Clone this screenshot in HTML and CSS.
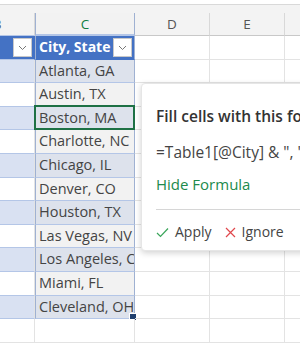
FILE: index.html
```html
<!DOCTYPE html>
<html lang="en">
<head>
    <meta charset="UTF-8">
    <meta name="viewport" content="width=device-width, initial-scale=1.0">
    <title>Fill cells</title>
    <link rel="stylesheet" href="styles.css">
</head>
<body>
    <div class="sheet">
        <div class="topbar"></div>
        <div class="topgap"></div>
        <div class="row colhead">
            <div class="cell b">B</div>
            <div class="cell c">C</div>
            <div class="cell d">D</div>
            <div class="cell e">E</div>
            <div class="cell f"></div>
        </div>
        <div class="row thead">
            <div class="cell b"><span class="drop"><svg width="9" height="6" viewBox="0 0 9 6"><path d="M1 1l3.5 3.5L8 1" fill="none" stroke="#777" stroke-width="1"/></svg></span></div>
            <div class="cell c">City, State<span class="drop"><svg width="9" height="6" viewBox="0 0 9 6"><path d="M1 1l3.5 3.5L8 1" fill="none" stroke="#777" stroke-width="1"/></svg></span></div>
            <div class="cell d"></div>
            <div class="cell e"></div>
            <div class="cell f"></div>
        </div>
        <div class="row band"><div class="cell b"></div><div class="cell c">Atlanta, GA</div><div class="cell d"></div><div class="cell e"></div><div class="cell f"></div></div>
        <div class="row"><div class="cell b"></div><div class="cell c">Austin, TX</div><div class="cell d"></div><div class="cell e"></div><div class="cell f"></div></div>
        <div class="row band"><div class="cell b"></div><div class="cell c active">Boston, MA</div><div class="cell d"></div><div class="cell e"></div><div class="cell f"></div></div>
        <div class="row"><div class="cell b"></div><div class="cell c">Charlotte, NC</div><div class="cell d"></div><div class="cell e"></div><div class="cell f"></div></div>
        <div class="row band"><div class="cell b"></div><div class="cell c">Chicago, IL</div><div class="cell d"></div><div class="cell e"></div><div class="cell f"></div></div>
        <div class="row"><div class="cell b"></div><div class="cell c">Denver, CO</div><div class="cell d"></div><div class="cell e"></div><div class="cell f"></div></div>
        <div class="row band"><div class="cell b"></div><div class="cell c">Houston, TX</div><div class="cell d"></div><div class="cell e"></div><div class="cell f"></div></div>
        <div class="row"><div class="cell b"></div><div class="cell c">Las Vegas, NV</div><div class="cell d"></div><div class="cell e"></div><div class="cell f"></div></div>
        <div class="row band"><div class="cell b"></div><div class="cell c">Los Angeles, CA</div><div class="cell d"></div><div class="cell e"></div><div class="cell f"></div></div>
        <div class="row"><div class="cell b"></div><div class="cell c">Miami, FL</div><div class="cell d"></div><div class="cell e"></div><div class="cell f"></div></div>
        <div class="row band"><div class="cell b"></div><div class="cell c last">Cleveland, OH<span class="handle"></span></div><div class="cell d"></div><div class="cell e"></div><div class="cell f"></div></div>
        <div class="row plain"><div class="cell b"></div><div class="cell c"></div><div class="cell d"></div><div class="cell e"></div><div class="cell f"></div></div>
    </div>

    <div class="popup">
        <div class="pop-title">Fill cells with this formula?</div>
        <div class="pop-formula">=Table1[@City] &amp; ", " &amp; Table1[@State]</div>
        <div class="pop-link">Hide Formula</div>
        <div class="pop-actions">
            <span class="act"><svg width="13" height="11" viewBox="0 0 13 11"><path d="M1 6l3.5 3.5L12 1.5" fill="none" stroke="#3aa55a" stroke-width="1.2"/></svg>Apply</span>
            <span class="act"><svg width="11" height="11" viewBox="0 0 11 11"><path d="M1 1l9 9M10 1l-9 9" fill="none" stroke="#e0474c" stroke-width="1.2"/></svg>Ignore</span>
        </div>
    </div>
</body>
</html>
```

FILE: styles.css
```css
body { margin: 0; width: 300px; height: 350px; overflow: hidden; position: relative; background: #fff; font-family: "Open Sans", "Noto Sans", sans-serif; }

.sheet { margin-left: -40px; width: 400px; }
.topbar { height: 4px; border-bottom: 1px solid #d9d9d9; background: #fff; }
.topgap { height: 8px; background: #f3f3f3; }

.row { display: flex; height: 23.6px; }
.cell { box-sizing: border-box; height: 100%; border-right: 1px solid #e3e3e3; border-bottom: 1px solid #e3e3e3; font-size: 14.5px; line-height: 22px; color: #444; white-space: nowrap; overflow: hidden; position: relative; }
.b { width: 75px; }
.c { width: 100px; padding-left: 3px; }
.d { width: 75px; }
.e { width: 75px; }
.f { width: 75px; }

.colhead { height: 23px; background: #f3f3f3; }
.colhead .cell { text-align: center; font-size: 13.5px; line-height: 22px; color: #555; border-right-color: #d8d8d8; border-bottom-color: #c8c8c8; }
.colhead .c { background: #d3f0e0; color: #107c41; border-bottom: 2px solid #107c41; padding-left: 0; }
.colhead .b { padding-left: 0; }

.thead .b, .thead .c { background: #4472c4; color: #fff; font-weight: 700; border-right-color: #4472c4; border-bottom-color: #4472c4; }
.thead .c { border-left: 1px solid #8ea3c8; font-size: 14px; }
.drop { position: absolute; right: 2px; top: 2px; width: 19px; height: 19px; box-sizing: border-box; background: #fff; border: 1px solid #c9c9c9; display: flex; align-items: center; justify-content: center; }

.row .b { border-bottom-color: #b4c6e7; }
.band .b { background: #d9e1f2; }
.row .c { border-left: 1px solid #9fb1d2; border-right: 1px solid #9fb1d2; border-bottom-color: #b4c6e7; background: #f2f2f2; }
.band .c { background: #dde2ec; }
.thead .c { background: #4472c4; border-bottom-color: #4472c4; }
.plain .b { border-bottom-color: #e3e3e3; }
.plain .c { background: #fff; border-left: 0; border-right: 1px solid #e3e3e3; border-bottom-color: #e3e3e3; }

.active { overflow: visible; }
.active::after { content: ""; position: absolute; left: -2px; top: -2px; right: -1px; bottom: -1px; border: 2px solid #1e7145; }
.last { overflow: visible; }
.handle { position: absolute; right: -2px; bottom: -2px; width: 6px; height: 6px; background: #1f3f6e; border: 1px solid #fff; border-width: 1px 0 0 1px; }

.popup { position: absolute; left: 141px; top: 83px; width: 200px; height: 168px; box-sizing: border-box; padding: 22px 0 0 14px; background: #fff; border: 1px solid #e6e6e6; border-radius: 4px; box-shadow: 0 2px 6px rgba(0, 0, 0, 0.18); white-space: nowrap; }
.pop-title { font-size: 15.5px; font-weight: 600; color: #333; line-height: 20px; }
.pop-formula { margin-top: 16px; font-size: 15.5px; color: #444; line-height: 20px; }
.pop-link { margin-top: 12px; font-size: 15px; color: #218a4c; line-height: 20px; padding-bottom: 15px; border-bottom: 1px solid #d6d6d6; }
.pop-actions { display: flex; gap: 13px; margin-top: 12px; font-size: 14px; color: #444; line-height: 20px; }
.act { display: flex; align-items: center; gap: 6px; }
```
